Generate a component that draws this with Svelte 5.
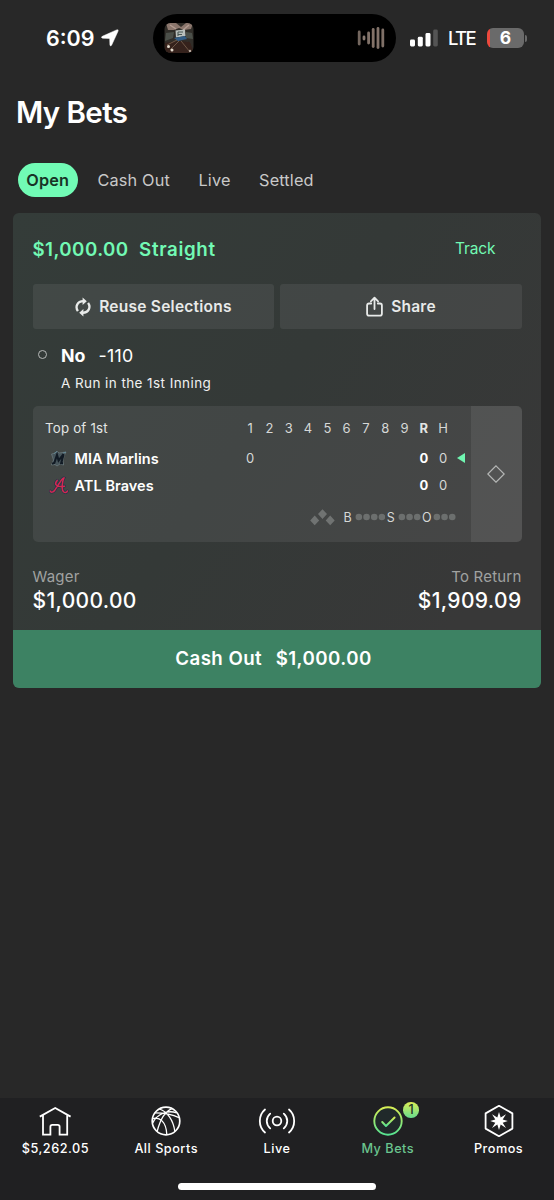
<script>
    let activeTab = 'Open';

    const tabs = ['Open', 'Cash Out', 'Live', 'Settled'];
    const innings = [1, 2, 3, 4, 5, 6, 7, 8, 9];
    const teams = [
        { id: 'mia', name: 'MIA Marlins', innings: [0], runs: 0, hits: 0, batting: true },
        { id: 'atl', name: 'ATL Braves', innings: [], runs: 0, hits: 0, batting: false }
    ];
    const counts = [
        { label: 'B', total: 4 },
        { label: 'S', total: 3 },
        { label: 'O', total: 3 }
    ];
    const navItems = [
        { id: 'home', label: '$5,262.05' },
        { id: 'sports', label: 'All Sports' },
        { id: 'live', label: 'Live' },
        { id: 'bets', label: 'My Bets', badge: 1 },
        { id: 'promos', label: 'Promos' }
    ];
</script>

<div class="screen">
    <div class="status">
        <div class="status-left">
            <span class="time">6:09</span>
            <svg class="location" viewBox="0 0 18 18" width="18" height="18">
                <path d="M15.6 .9 Q17.8 .1 17 2.3 L10.6 16.2 Q9.4 18 8.9 15.8 L8.7 10 Q8.7 9.4 8.1 9.4 L1.6 9.2 Q-.6 8.6 1.3 7.3Z" fill="#fff" stroke="#fff" stroke-width=".5"/>
            </svg>
        </div>
        <div class="island">
            <svg class="album" viewBox="0 0 30 30" width="30" height="30">
                <defs>
                    <clipPath id="albumClip"><rect x=".5" width="29" height="30" rx="6"/></clipPath>
                    <filter id="albumSoft"><feGaussianBlur stdDeviation="0.55"/></filter>
                </defs>
                <g clip-path="url(#albumClip)">
                    <rect width="30" height="30" fill="#302d28"/>
                    <g filter="url(#albumSoft)">
                        <path d="M2 0 L12 0 17 4 22 0 29 0 27 6 20 7 15 5 10 7 4 7Z" fill="#8b776d"/>
                        <path d="M6 2 L12 6 M25 2 L19 7" stroke="#b39c91" stroke-width="1.5"/>
                        <path d="M2 10 L10 9 9 15 1 18Z M22 9 L28 10 29 16 22 15Z" fill="#4b5048"/>
                        <path d="M11.5 7.5 L21 6.5 21.5 13 12 14.5Z" fill="#b9c0bd"/>
                        <path d="M14 9 H19 M14 9 V13 M14 11.5 H18" stroke="#4b5856" stroke-width="1.1"/>
                        <path d="M10 15 L21 13 23 16 14 18Z" fill="#315d86"/>
                        <path d="M1 20 L13 18 26 19 30 30 0 30Z" fill="#35211b"/>
                        <path d="M3 22 L13 17 M6 27 L15 18 M17 18 L26 29" stroke="#7b6452" stroke-width=".8"/>
                        <circle cx="4.5" cy="23.5" r="1.5" fill="#e2dacd"/>
                        <circle cx="8" cy="27" r="1.5" fill="#e2dacd"/>
                        <circle cx="26" cy="28" r="1.2" fill="#b7a99f"/>
                    </g>
                </g>
            </svg>
            <svg class="wave" viewBox="0 0 28 24" width="28" height="24">
                <g stroke-width="2.8" stroke-linecap="round">
                    <path d="M2.2 6 V18" stroke="#74675f"/>
                    <path d="M7 10.9 V13.1" stroke="#877970"/>
                    <path d="M11.6 7 V17" stroke="#817269"/>
                    <path d="M16.2 3.5 V20.5" stroke="#837268"/>
                    <path d="M21 2.4 V21.6" stroke="#83736a"/>
                    <path d="M25.8 4 V20" stroke="#7f7067"/>
                </g>
            </svg>
        </div>
        <div class="status-right">
            <svg viewBox="0 0 28 18" width="28" height="18">
                <rect x="0" y="10.5" width="5" height="7" rx="1.4" fill="#fff"/>
                <rect x="7.8" y="7.8" width="5" height="9.7" rx="1.4" fill="#fff"/>
                <rect x="15.5" y="4" width="5" height="13.5" rx="1.4" fill="#fff"/>
                <rect x="23.2" y=".5" width="4.6" height="17" rx="1.4" fill="#545454"/>
            </svg>
            <span class="lte">LTE</span>
            <div class="battery">
                <div class="cell">6</div>
                <div class="cap"></div>
            </div>
        </div>
    </div>

    <h1>My Bets</h1>

    <div class="tabs">
        {#each tabs as tab}
            <button class="tab" class:active={tab === activeTab} on:click={() => activeTab = tab}>{tab}</button>
        {/each}
    </div>

    <div class="card">
        <div class="card-body">
            <div class="card-header">
                <div class="stake"><span>$1,000.00</span><span class="type">Straight</span></div>
                <span class="track">Track</span>
            </div>

            <div class="actions">
                <button class="action">
                    <svg class="reuse" viewBox="0 0 16 20" width="16" height="20">
                        <path d="M2.9 14.2 C-.1 9.8 2.2 4.4 8.4 4.2 M13.1 5.8 C16.1 10.2 13.8 15.6 7.6 15.8" fill="none" stroke="#e8eae9" stroke-width="2.3"/>
                        <path d="M7.6 .4 L11.8 4.2 7.6 8Z M8.4 12 L4.2 15.8 8.4 19.6Z" fill="#e8eae9"/>
                    </svg>
                    Reuse Selections
                </button>
                <button class="action share">
                    <svg viewBox="0 0 17 21" width="17" height="21">
                        <path d="M5.2 7.5 H3 Q1.1 7.5 1.1 9.4 V17.8 Q1.1 19.7 3 19.7 H14 Q15.9 19.7 15.9 17.8 V9.4 Q15.9 7.5 14 7.5 H11.8 M8.5 13 V2 M4.9 5.3 L8.5 1.7 12.1 5.3" fill="none" stroke="#e8eae9" stroke-width="1.8" stroke-linecap="round" stroke-linejoin="round"/>
                    </svg>
                    Share
                </button>
            </div>

            <div class="selection">
                <span class="ring"></span>
                <div>
                    <div class="pick"><b>No</b><span>-110</span></div>
                    <div class="market">A Run in the 1st Inning</div>
                </div>
            </div>

            <div class="scoreboard">
                <div class="score-main">
                    <div class="score-row head">
                        <span class="period">Top of 1st</span>
                        {#each innings as inning}
                            <span class="num">{inning}</span>
                        {/each}
                        <span class="num runs">R</span>
                        <span class="num">H</span>
                    </div>
                    {#each teams as team}
                        <div class="score-row">
                            <span class="team">
                                {#if team.id === 'mia'}
                                    <svg viewBox="0 0 20 20" width="20" height="20">
                                        <path d="M2.5 6 L6.5 5 8 3 10 5 17 4 15 8 14 13 14.5 17 11 16 8 18 6 16.5 2.5 17 4.5 12Z" fill="#46545a" stroke="#76848a" stroke-width=".6"/>
                                        <path d="M3 15.8 L5.3 15 8 7 9.6 12.5 14.6 6.2 12.2 15.2 H14" fill="none" stroke="#111a24" stroke-width="2.1"/>
                                        <path d="M5 5.6 L8 3.5 M14 5 L17 4.2" stroke="#6590a0" stroke-width=".8"/>
                                    </svg>
                                {:else}
                                    <svg viewBox="0 0 20 20" width="20" height="20">
                                        <g fill="none" stroke-linecap="round">
                                            <path d="M1.2 16 C2 18 4.3 17.3 5.8 15.2 L11.4 6.6 C12.7 4.5 14.3 2.8 15 3 C13.3 6 12 14.5 14.8 17 C16.4 18.2 18 17.2 18.4 16 M8.2 5.4 C5.4 8.3 5.6 12.6 15.6 11.2" stroke="#24354a" stroke-width="2.8"/>
                                            <path d="M1.2 16 C2 18 4.3 17.3 5.8 15.2 L11.4 6.6 C12.7 4.5 14.3 2.8 15 3 C13.3 6 12 14.5 14.8 17 C16.4 18.2 18 17.2 18.4 16 M8.2 5.4 C5.4 8.3 5.6 12.6 15.6 11.2" stroke="#d42852" stroke-width="1.5"/>
                                        </g>
                                    </svg>
                                {/if}
                                {team.name}
                            </span>
                            {#each innings as inning, i}
                                <span class="num">{team.innings[i] ?? ''}</span>
                            {/each}
                            <span class="num total">{team.runs}</span>
                            <span class="num">{team.hits}</span>
                            {#if team.batting}
                                <svg class="arrow" viewBox="0 0 8 10" width="8" height="10"><path d="M8 0 V10 L0 5Z" fill="#70f6b1"/></svg>
                            {/if}
                        </div>
                    {/each}
                    <div class="count">
                        <svg viewBox="0 0 25 17" width="25" height="17">
                            <path d="M12.5 .3 L17 5.1 12.5 9.9 8 5.1Z M4.7 6.6 L9.2 11.4 4.7 16.2 .2 11.4Z M20.2 6.6 L24.7 11.4 20.2 16.2 15.7 11.4Z" fill="#707372"/>
                        </svg>
                        {#each counts as count}
                            <span class="letter">{count.label}</span>
                            <svg class="dots" viewBox="0 0 {count.total * 7.7} 8" width={count.total * 7.7} height="8">
                                {#each Array(count.total) as _, i}
                                    <circle cx={3.85 + i * 7.7} cy="4" r="3.3" fill="#6c6f6e"/>
                                {/each}
                            </svg>
                        {/each}
                    </div>
                </div>
                <div class="score-side">
                    <svg viewBox="0 0 18 18" width="18" height="18"><path d="M9 .8 L17.2 9 9 17.2 .8 9Z" fill="none" stroke="#b5b7b6" stroke-width="1.2"/></svg>
                </div>
            </div>

            <div class="amounts">
                <div>
                    <div class="label">Wager</div>
                    <div class="amount">$1,000.00</div>
                </div>
                <div class="return">
                    <div class="label">To Return</div>
                    <div class="amount">$1,909.09</div>
                </div>
            </div>
        </div>
        <button class="cashout"><span>Cash Out</span><span>$1,000.00</span></button>
    </div>

    <div class="nav">
        <div class="nav-items">
            {#each navItems as item}
                <div class="nav-item" class:current={item.id === 'bets'}>
                    <div class="nav-icon">
                        {#if item.id === 'home'}
                            <svg viewBox="0 0 34 34" width="34" height="34">
                                <path d="M1.8 12.6 L17.2 4 32.6 12.6 M5 11 V30.6 H12.4 V22.8 Q12.4 20.9 14.3 20.9 H19.7 Q21.6 20.9 21.6 22.8 V30.6 H29.2 V11" fill="none" stroke="#fff" stroke-width="1.8"/>
                            </svg>
                        {:else if item.id === 'sports'}
                            <svg viewBox="0 0 34 34" width="34" height="34">
                                <g fill="none" stroke="#fff" stroke-width="1.3">
                                    <circle cx="17" cy="17" r="13.8" stroke-width="1.7"/>
                                    <path d="M10.5 5 C18 7.5 24.5 16 25.8 27.5 M23 4.7 C17.5 6.8 12 12.5 8.2 27.3 M5.8 8.9 C14.5 9 23 10.2 30 13.6 M3.5 14.6 C10.5 12.5 17.2 17.5 17.8 30.5 M3.7 19 C8 9.8 19 5.5 27.7 9"/>
                                </g>
                            </svg>
                        {:else if item.id === 'live'}
                            <svg viewBox="0 0 38 34" width="38" height="34">
                                <g fill="none" stroke="#fff" stroke-width="1.8" stroke-linecap="round">
                                    <circle cx="19" cy="17" r="4.3"/>
                                    <path d="M12.2 9.7 C7.6 13.8 7.6 20.2 12.2 24.3 M25.8 9.7 C30.4 13.8 30.4 20.2 25.8 24.3 M7 5.5 C.1 11.5 .1 22.5 7 28.5 M31 5.5 C37.9 11.5 37.9 22.5 31 28.5"/>
                                </g>
                            </svg>
                        {:else if item.id === 'bets'}
                            <svg viewBox="0 0 34 34" width="34" height="34">
                                <defs>
                                    <linearGradient id="checkGradient" x1="0" y1="0" x2="0" y2="1">
                                        <stop offset="0" stop-color="#d6ed55"/>
                                        <stop offset="1" stop-color="#56e391"/>
                                    </linearGradient>
                                </defs>
                                <circle cx="17" cy="17" r="13.7" fill="#20292a" stroke="url(#checkGradient)" stroke-width="1.9"/>
                                <path d="M11.2 18 L15 22 23.6 13.5" fill="none" stroke="url(#checkGradient)" stroke-width="1.9" stroke-linecap="round" stroke-linejoin="round"/>
                            </svg>
                            <span class="badge">{item.badge}</span>
                        {:else}
                            <svg viewBox="0 0 34 34" width="34" height="34">
                                <path d="M17 1.8 L30.4 9.4 V24.6 L17 32.2 3.6 24.6 V9.4Z" fill="none" stroke="#fff" stroke-width="1.8" stroke-linejoin="round"/>
                                <path d="M17 8 L18.7 13.4 24 10.2 20.7 15.4 25.8 17 20.7 18.7 24 23.9 18.7 20.6 17 26 15.3 20.6 10 23.9 13.3 18.7 8.2 17 13.3 15.4 10 10.2 15.3 13.4Z" fill="#fff"/>
                            </svg>
                        {/if}
                    </div>
                    <span>{item.label}</span>
                </div>
            {/each}
        </div>
        <div class="home-bar"></div>
    </div>
</div>

<style>
    :global(body) {
        background: #282828;
    }

    .screen {
        display: flex;
        flex-direction: column;
        width: 554px;
        height: 1200px;
        overflow: hidden;
        background: #282828;
        color: #fff;
        font-family: Inter, "Liberation Sans", sans-serif;
    }

    .screen * {
        box-sizing: border-box;
    }

    svg {
        display: block;
        flex: none;
    }

    button {
        border: 0;
        font-family: inherit;
        cursor: pointer;
    }

    .status {
        display: grid;
        grid-template-columns: 152.5px 243.5px 158px;
        align-items: center;
        height: 76px;
        flex: none;
    }

    .status-left {
        display: flex;
        align-items: center;
        gap: 5px;
        padding-left: 46px;
    }

    .time {
        width: 50px;
        font-size: 21.5px;
        font-weight: 600;
        letter-spacing: 0;
    }

    .island {
        display: flex;
        align-items: center;
        justify-content: space-between;
        height: 47.5px;
        padding: 0 11.5px 0 11.5px;
        border-radius: 24px;
        background: #000;
    }

    .status-right {
        display: flex;
        align-items: center;
        padding-left: 14px;
    }

    .lte {
        width: 29px;
        margin-left: 10px;
        font-size: 18.5px;
        font-weight: 500;
        letter-spacing: -1.6px;
    }

    .battery {
        display: flex;
        align-items: center;
        gap: 1px;
        margin-left: 10px;
    }

    .cell {
        width: 37px;
        height: 20px;
        border-radius: 6px;
        background: linear-gradient(90deg, #ec493d 2.5px, #6a6a6a 2.5px);
        font-size: 17.5px;
        font-weight: 700;
        line-height: 20px;
        text-align: center;
    }

    .cap {
        width: 2px;
        height: 7px;
        border-radius: 0 3px 3px 0;
        background: #6a6a6a;
    }

    h1 {
        height: 87px;
        margin: 0;
        padding: 18px 0 0 16px;
        font-size: 29.5px;
        font-weight: 600;
        line-height: 37px;
        letter-spacing: -0.6px;
    }

    .tabs {
        display: flex;
        height: 49.5px;
        padding-left: 18px;
        flex: none;
    }

    .tab {
        height: 34px;
        padding: 0;
        background: none;
        color: #c9c9c9;
        font-size: 16.3px;
        margin-right: 28.5px;
        letter-spacing: 0.15px;
    }

    .tab.active {
        width: 59.5px;
        margin-right: 20px;
        border-radius: 17px;
        background: #71fbb5;
        color: #183326;
        font-weight: 600;
    }

    .card {
        margin: 0 13px;
        height: 475px;
        border-radius: 6px;
        overflow: hidden;
        background: linear-gradient(125deg, #343c39 0%, #343937 45%, #383838 85%);
    }

    .card-body {
        height: 417px;
        padding: 0 19.5px;
    }

    .card-header {
        display: flex;
        justify-content: space-between;
        align-items: center;
        height: 71px;
        padding: 3px 26px 0 0;
        color: #72f9b4;
    }

    .stake {
        display: flex;
        gap: 10.5px;
        font-size: 18.7px;
        font-weight: 600;
        letter-spacing: 0.45px;
    }

    .type {
        letter-spacing: 0.65px;
    }

    .track {
        font-size: 15.5px;
        letter-spacing: -0.1px;
        padding-bottom: 2px;
    }

    .actions {
        display: grid;
        grid-template-columns: 1fr 1fr;
        gap: 6px;
    }

    .action {
        display: flex;
        align-items: center;
        justify-content: center;
        gap: 8.5px;
        height: 45px;
        padding: 1px 0 0;
        border-radius: 3px;
        background: rgba(255, 255, 255, 0.07);
        color: #e8eae9;
        font-size: 15.5px;
        font-weight: 600;
        letter-spacing: 0.25px;
    }

    .selection {
        display: flex;
        height: 77px;
        padding: 14px 0 0 5px;
    }

    .ring {
        width: 9px;
        height: 9px;
        margin: 7px 14.5px 0 0;
        border: 1.3px solid #b7bab9;
        border-radius: 50%;
    }

    .pick {
        display: flex;
        gap: 13px;
        font-size: 17.8px;
        line-height: 25px;
    }

    .pick span {
        letter-spacing: 0.3px;
    }

    .market {
        margin-top: 5px;
        font-size: 13.5px;
        line-height: 20px;
        letter-spacing: 0.42px;
        color: #f0f1f0;
    }

    .scoreboard {
        display: flex;
        height: 136px;
        border-radius: 5px;
        overflow: hidden;
        background: rgba(255, 255, 255, 0.07);
    }

    .score-main {
        width: 438px;
        padding: 8px 0 0 12.5px;
    }

    .score-row {
        display: grid;
        grid-template-columns: 195.5px repeat(11, 19.3px) 17px;
        align-items: center;
        height: 27px;
        font-size: 13px;
        color: #d6d8d7;
    }

    .head {
        height: 31px;
        padding-bottom: 2px;
    }

    .period {
        letter-spacing: 0.2px;
        color: #e3e5e4;
        font-size: 13.3px;
    }

    .num {
        text-align: center;
    }

    .runs,
    .total {
        color: #fff;
        font-weight: 700;
    }

    .runs {
        color: #e3e5e4;
    }

    .team {
        display: flex;
        align-items: center;
        gap: 6px;
        padding-left: 3.5px;
        font-size: 14.5px;
        font-weight: 600;
        letter-spacing: 0.05px;
        color: #fff;
    }

    .arrow {
        justify-self: center;
    }

    .count {
        display: flex;
        align-items: center;
        height: 37px;
        padding-left: 265px;
        font-size: 12.5px;
        color: #d6d8d7;
    }

    .letter {
        width: 9px;
        text-align: center;
        margin-left: 1px;
    }

    svg:first-child + .letter {
        margin-left: 8px;
    }

    .dots {
        margin-left: 2.5px;
    }

    .score-side {
        display: flex;
        flex: 1;
        align-items: center;
        justify-content: center;
        background: rgba(255, 255, 255, 0.07);
    }

    .amounts {
        display: flex;
        justify-content: space-between;
        padding-top: 24px;
    }

    .label {
        color: #a0a2a1;
        font-size: 15px;
        line-height: 21px;
        letter-spacing: 0.2px;
    }

    .amount {
        font-size: 21px;
        font-weight: 500;
        line-height: 28px;
        letter-spacing: 0.35px;
    }

    .return {
        text-align: right;
    }

    .cashout {
        display: flex;
        align-items: center;
        justify-content: center;
        gap: 13.5px;
        width: 100%;
        height: 58px;
        padding: 0 7px 1px 0;
        background: #3d8263;
        color: #fff;
        font-size: 18.7px;
        font-weight: 600;
        letter-spacing: 0.45px;
    }

    .nav {
        display: flex;
        flex-direction: column;
        align-items: center;
        justify-content: space-between;
        height: 102px;
        margin-top: auto;
        padding: 6px 0 10px;
        background: #202022;
    }

    .nav-items {
        display: grid;
        grid-template-columns: repeat(5, 1fr);
        width: 100%;
    }

    .nav-item {
        display: flex;
        flex-direction: column;
        align-items: center;
        gap: 2px;
        font-size: 12.7px;
        font-weight: 500;
        line-height: 18px;
        letter-spacing: 0.5px;
    }

    .nav-icon {
        position: relative;
    }

    .current {
        color: #6bc58f;
    }

    .badge {
        position: absolute;
        left: 32.5px;
        top: -2px;
        width: 15.5px;
        height: 15.5px;
        border-radius: 50%;
        background: linear-gradient(#dced56, #66dc8e);
        color: #203126;
        font-size: 12.5px;
        line-height: 15.5px;
        letter-spacing: 0;
        text-align: center;
    }

    .home-bar {
        width: 198px;
        height: 7px;
        border-radius: 4px;
        background: #fff;
    }
</style>
